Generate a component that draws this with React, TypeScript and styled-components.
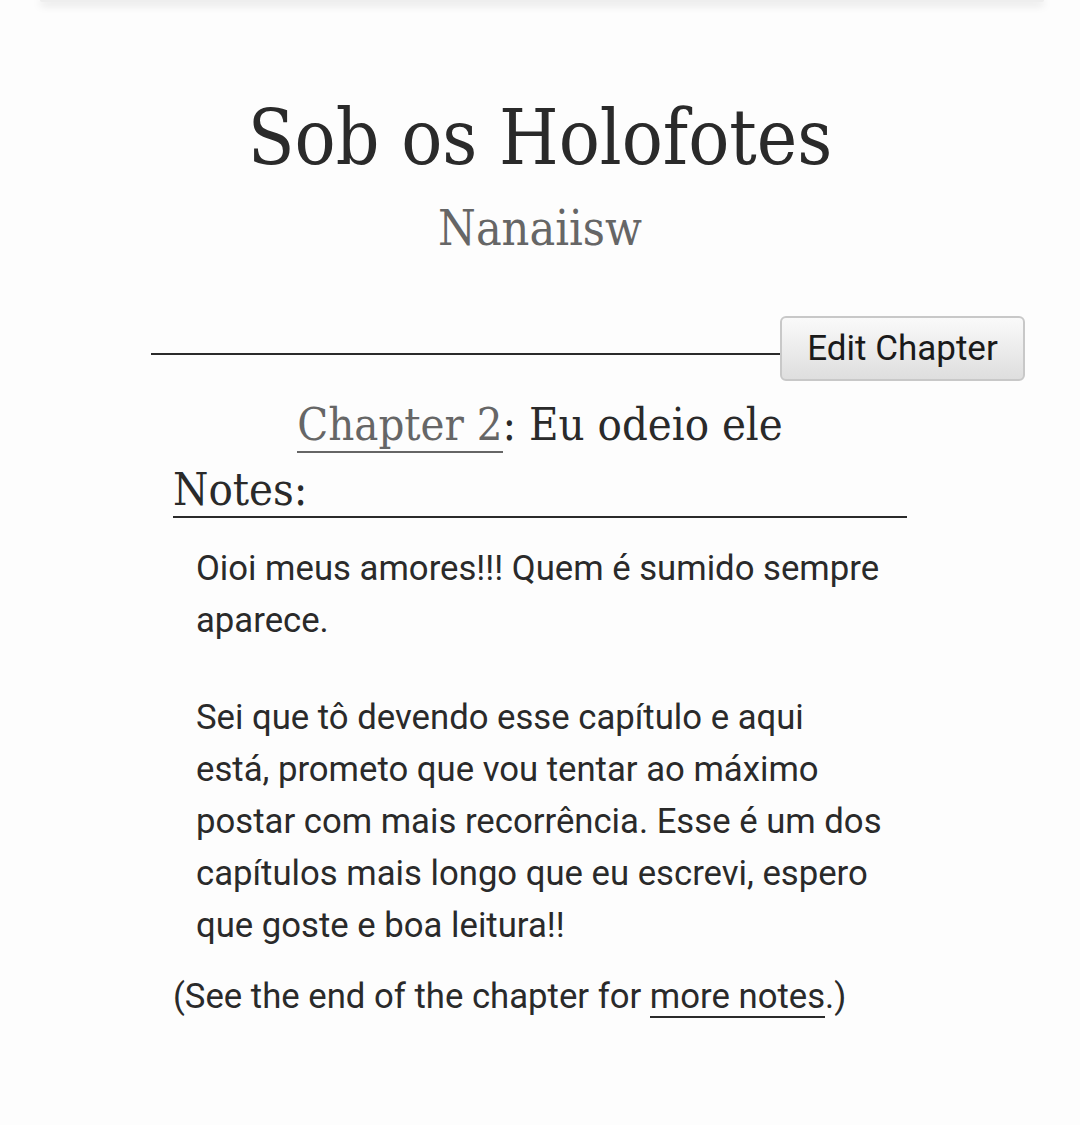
import React from "react";
import styled, { createGlobalStyle } from "styled-components";

const GlobalStyle = createGlobalStyle`
  html, body {
    margin: 0;
    padding: 0;
    background: #fdfdfd;
  }
  body {
    font-family: Roboto, "Liberation Sans", sans-serif;
    color: #2a2a2a;
  }
`;

const serif = `
  font-family: "DejaVu Serif", serif;
  font-stretch: condensed;
  font-weight: normal;
`;

const Page = styled.div`
  width: 1080px;
  min-height: 1125px;
  overflow: hidden;
`;

const TopBar = styled.div`
  height: 2px;
  margin: 0 36px 0 40px;
  border-radius: 0 0 8px 8px;
  background: #eeeeee;
  box-shadow: 0 2px 8px rgba(0, 0, 0, 0.28);
`;

const Preface = styled.header`
  display: flex;
  flex-direction: column;
  align-items: center;
  padding-top: 88px;
`;

const Title = styled.h1`
  margin: 0;
  ${serif}
  font-size: 76px;
  line-height: 96px;
  color: #2a2a2a;
`;

const Byline = styled.h2`
  margin: 12px 0 0;
  ${serif}
  font-size: 48px;
  line-height: 60px;
  color: #666666;
`;

const Toolbar = styled.div`
  display: flex;
  align-items: flex-start;
  margin: 58px 55px 0 151px;
`;

const Rule = styled.div`
  flex: 1;
  height: 2px;
  margin-top: 37px;
  background: #2a2a2a;
`;

const EditButton = styled.button`
  width: 245px;
  height: 65px;
  border: 2px solid #c8c8c8;
  border-radius: 6px;
  background: linear-gradient(#fafafa, #dedede);
  font-family: Roboto, "Liberation Sans", sans-serif;
  font-size: 35px;
  color: #1a1a1a;
  padding: 0;
`;

const ChapterHeading = styled.h2`
  margin: 14px 0 0;
  text-align: center;
  ${serif}
  font-size: 45px;
  line-height: 60px;
  color: #2a2a2a;
`;

const ChapterLink = styled.a`
  color: #666666;
  text-decoration: none;
  border-bottom: 2px solid #666666;
`;

const Notes = styled.section`
  margin: 0 173px;
`;

const NotesHeading = styled.h3`
  margin: 9px 0 0;
  padding: 0;
  border-bottom: 2px solid #2a2a2a;
  ${serif}
  font-size: 45px;
  line-height: 52px;
  color: #2a2a2a;
`;

const NotesBody = styled.blockquote`
  margin: 24px 24px 0 23px;
  padding: 0;
`;

const Para = styled.p`
  margin: 0 0 45px;
  font-size: 34.7px;
  line-height: 52px;
`;

const EndNote = styled.p`
  margin: -26px 0 0;
  font-size: 34.7px;
  line-height: 52px;
`;

const InlineLink = styled.a`
  color: #2a2a2a;
  text-decoration: none;
  border-bottom: 2px solid #2a2a2a;
`;

export default function App() {
  return (
    <Page>
      <GlobalStyle />
      <TopBar />
      <Preface>
        <Title>Sob os Holofotes</Title>
        <Byline>Nanaiisw</Byline>
      </Preface>
      <Toolbar>
        <Rule />
        <EditButton>Edit Chapter</EditButton>
      </Toolbar>
      <ChapterHeading>
        <ChapterLink href="#">Chapter 2</ChapterLink>: Eu odeio ele
      </ChapterHeading>
      <Notes>
        <NotesHeading>Notes:</NotesHeading>
        <NotesBody>
          <Para>Oioi meus amores!!! Quem é sumido sempre aparece.</Para>
          <Para>
            Sei que tô devendo esse capítulo e aqui está, prometo que vou tentar ao máximo
            postar com mais recorrência. Esse é um dos capítulos mais longo que eu escrevi,
            espero que goste e boa leitura!!
          </Para>
        </NotesBody>
        <EndNote>
          (See the end of the chapter for <InlineLink href="#">more notes</InlineLink>.)
        </EndNote>
      </Notes>
    </Page>
  );
}
